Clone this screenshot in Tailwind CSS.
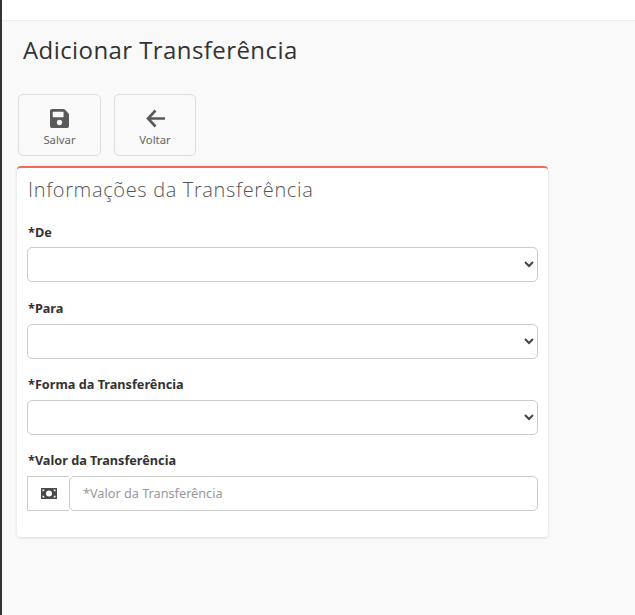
<!DOCTYPE html>
<html lang="en">
<head>
    <meta charset="UTF-8">
    <meta name="viewport" content="width=device-width, initial-scale=1.0">
    <title>Adicionar Transferência</title>
    <script src="https://cdn.jsdelivr.net/npm/@tailwindcss/browser@4"></script>
</head>
<body class="bg-[#f9f9f9] h-[615px] overflow-hidden font-['Noto_Sans',sans-serif]">
    <div class="h-[615px] border-l-2 border-[#333] flex flex-col">
        <!-- Top bar -->
        <div class="h-[21px] bg-white border-b border-[#ececec]"></div>

        <!-- Title -->
        <h1 class="pl-[21px] pt-[13px] h-[52px] text-[24px] leading-[32px] text-[#333] font-['Open_Sans',sans-serif] font-normal tracking-[0.42px]">Adicionar Transferência</h1>

        <!-- Actions -->
        <div class="flex gap-[13px] pl-4 mt-[21px]">
            <button class="w-[83px] h-[62px] border border-[#ddd] rounded-[5px] flex flex-col items-center pt-[14px] text-[#666]">
                <svg class="w-[19px] h-[19px]" viewBox="0 0 448 448" fill="#5a5a5a"><path d="M433.9 97.9l-83.9-83.9A48 48 0 0 0 316.1 0H48C21.5 0 0 21.5 0 48v352c0 26.5 21.5 48 48 48h352c26.5 0 48-21.5 48-48V131.9a48 48 0 0 0-14.1-34zM224 384c-35.3 0-64-28.7-64-64s28.7-64 64-64 64 28.7 64 64-28.7 64-64 64zM320 79.5V180c0 6.6-5.4 12-12 12H76c-6.6 0-12-5.4-12-12V76c0-6.6 5.4-12 12-12h228.5c3.2 0 6.2 1.3 8.5 3.5l3.5 3.5c2.3 2.3 3.5 5.3 3.5 8.5z"/></svg>
                <span class="text-[11.3px] leading-[16px] mt-[4px]">Salvar</span>
            </button>
            <button class="w-[82px] h-[62px] border border-[#ddd] rounded-[5px] flex flex-col items-center pt-[14px] text-[#666]">
                <svg class="w-[21px] h-[19px]" viewBox="0 0 21 19" fill="none" stroke="#5a5a5a" stroke-width="2.6"><path d="M20 9.5H3M10.5 1.5 3 9.5l7.5 8"/></svg>
                <span class="text-[11.3px] leading-[16px] mt-[4px]">Voltar</span>
            </button>
        </div>

        <!-- Card -->
        <div class="ml-[15px] mt-[10px] w-[531px] h-[371px] bg-white border-t-2 border-[#f26a5a] rounded-[4px] shadow-[0_1px_3px_rgba(0,0,0,0.12)] px-[10px]">
            <h2 class="text-[20px] leading-[26px] mt-[9px] text-[#555] font-['Open_Sans',sans-serif] font-light tracking-[0.65px] pl-px">Informações da Transferência</h2>

            <form class="mt-[20px]">
                <label class="block text-[12.7px] leading-[18px] font-bold text-[#333] pl-px">*De</label>
                <div class="relative mt-[6px] mb-[17px]">
                    <select class="block w-full h-[35px] border border-[#ccc] rounded-[5px] bg-white appearance-none"></select>
                    <svg class="absolute right-[4px] top-[14px] w-[10px] h-[7px]" viewBox="0 0 10 7" fill="none" stroke="#444" stroke-width="2"><path d="M1 1l4 4 4-4"/></svg>
                </div>

                <label class="block text-[12.7px] leading-[18px] font-bold text-[#333] pl-px">*Para</label>
                <div class="relative mt-[7px] mb-[16px]">
                    <select class="block w-full h-[35px] border border-[#ccc] rounded-[5px] bg-white appearance-none"></select>
                    <svg class="absolute right-[4px] top-[14px] w-[10px] h-[7px]" viewBox="0 0 10 7" fill="none" stroke="#444" stroke-width="2"><path d="M1 1l4 4 4-4"/></svg>
                </div>

                <label class="block text-[12.7px] leading-[18px] font-bold text-[#333] pl-px">*Forma da Transferência</label>
                <div class="relative mt-[7px] mb-[16px]">
                    <select class="block w-full h-[35px] border border-[#ccc] rounded-[5px] bg-white appearance-none"></select>
                    <svg class="absolute right-[4px] top-[14px] w-[10px] h-[7px]" viewBox="0 0 10 7" fill="none" stroke="#444" stroke-width="2"><path d="M1 1l4 4 4-4"/></svg>
                </div>

                <label class="block text-[12.7px] leading-[18px] font-bold text-[#333] pl-px">*Valor da Transferência</label>
                <div class="flex mt-[7px]">
                    <div class="w-[42px] h-[35px] border border-[#ccc] border-r-0 flex items-center justify-center">
                        <svg class="w-[16px] h-[11px]" viewBox="0 0 16 11"><path fill="#4a4a4a" fill-rule="evenodd" d="M0 0h16v11H0zM8 2.5a3 3 0 1 0 0 6 3 3 0 0 0 0-6zM1.5 1.5v2a2 2 0 0 0 2-2zm13 0h-2a2 2 0 0 0 2 2zm-13 8h2a2 2 0 0 0-2-2zm13 0v-2a2 2 0 0 0-2 2z"/></svg>
                    </div>
                    <input type="text" placeholder="*Valor da Transferência" class="flex-1 h-[35px] border border-[#ccc] rounded-[5px] px-[13px] pb-[2px] text-[12.7px] placeholder:text-[#999] outline-none">
                </div>
            </form>
        </div>
    </div>
</body>
</html>
